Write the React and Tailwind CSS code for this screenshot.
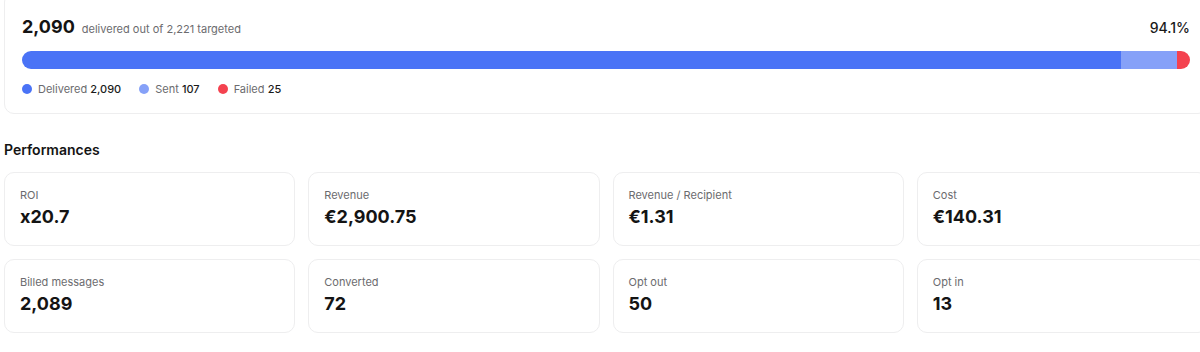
import React from 'react';

const delivery = { delivered: 2090, sent: 107, failed: 25, targeted: 2221 };

const segments = [
  { key: 'delivered', label: 'Delivered', value: delivery.delivered, color: 'bg-[#4a73f6]' },
  { key: 'sent', label: 'Sent', value: delivery.sent, color: 'bg-[#86a1f8]' },
  { key: 'failed', label: 'Failed', value: delivery.failed, color: 'bg-[#f4424f]' },
];

const stats = [
  { label: 'ROI', value: 'x20.7' },
  { label: 'Revenue', value: '€2,900.75' },
  { label: 'Revenue / Recipient', value: '€1.31' },
  { label: 'Cost', value: '€140.31' },
  { label: 'Billed messages', value: '2,089' },
  { label: 'Converted', value: '72' },
  { label: 'Opt out', value: '50' },
  { label: 'Opt in', value: '13' },
];

const fmt = (n) => n.toLocaleString('en-US');

function DeliveryCard() {
  const total = segments.reduce((s, x) => s + x.value, 0);

  return (
    <div className="-mt-[8px] rounded-[10px] border border-[#eeeeef] bg-white pt-[22px] pb-[16px] pl-[17px] pr-[17px]">
      <div className="flex items-baseline justify-between h-[24px]">
        <div className="flex items-baseline gap-[7px]">
          <span className="text-[18px] leading-[24px] font-bold text-[#141414]">{fmt(delivery.delivered)}</span>
          <span className="text-[11px] text-[#6b6b6e]">delivered out of {fmt(delivery.targeted)} targeted</span>
        </div>
        <span className="text-[14px] font-medium text-[#1a1a1a]">94.1%</span>
      </div>
      <div className="mt-[12px] flex h-[18px] w-full overflow-hidden rounded-full">
        {segments.map((s) => (
          <div key={s.key} className={`h-full ${s.color}`} style={{ width: `${(s.value / total) * 100}%` }} />
        ))}
      </div>
      <div className="mt-[12px] flex items-center gap-[18px] h-[16px]">
        {segments.map((s) => (
          <div key={s.key} className="flex items-center gap-[6px] text-[11px]">
            <span className={`inline-block h-[10px] w-[10px] rounded-full ${s.color}`} />
            <span className="text-[#6b6b6e]">
              {s.label} <span className="font-medium text-[#1a1a1a]">{fmt(s.value)}</span>
            </span>
          </div>
        ))}
      </div>
    </div>
  );
}

function StatCard({ label, value }) {
  return (
    <div className="rounded-[10px] border border-[#eeeeef] bg-white px-[15px] pt-[14px] pb-[16px]">
      <div className="text-[11px] leading-[16px] text-[#6b6b6e]">{label}</div>
      <div className="mt-[2px] text-[18px] leading-[24px] font-bold text-[#141414]">{value}</div>
    </div>
  );
}

export default function App() {
  return (
    <div className="h-[352px] w-[1200px] overflow-hidden bg-white" style={{ fontFamily: 'Inter, "Noto Sans", sans-serif' }}>
      <div className="ml-[4px] w-[1204px]">
        <DeliveryCard />
        <h2 className="mt-[26px] text-[14px] leading-[20px] font-semibold text-[#141414]">Performances</h2>
        <div className="mt-[12px] grid grid-cols-4 gap-[13px]">
          {stats.map((s) => (
            <StatCard key={s.label} {...s} />
          ))}
        </div>
      </div>
    </div>
  );
}
